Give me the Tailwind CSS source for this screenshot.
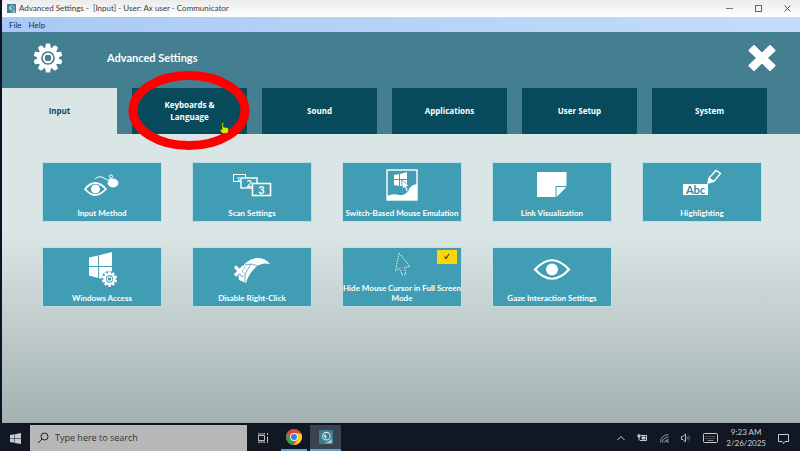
<!DOCTYPE html>
<html lang="en">
<head>
    <meta charset="UTF-8">
    <meta name="viewport" content="width=device-width, initial-scale=1.0">
    <title>Advanced Settings - Communicator</title>
    <script src="https://cdn.jsdelivr.net/npm/@tailwindcss/browser@4"></script>
</head>
<body class="min-h-screen flex flex-col bg-[#0d1426] font-['Lato','Open_Sans',sans-serif]">
    <!-- shared shapes -->
    <svg class="hidden">
        <symbol id="gear" viewBox="0 0 28 30">
            <g fill="currentColor">
                <g id="teeth">
                    <path d="M10.8 6 L12 0.6 H16 L17.2 6 Z" />
                    <path d="M10.8 6 L12 0.6 H16 L17.2 6 Z" transform="rotate(36 14 15)" />
                    <path d="M10.8 6 L12 0.6 H16 L17.2 6 Z" transform="rotate(72 14 15)" />
                    <path d="M10.8 6 L12 0.6 H16 L17.2 6 Z" transform="rotate(108 14 15)" />
                    <path d="M10.8 6 L12 0.6 H16 L17.2 6 Z" transform="rotate(144 14 15)" />
                </g>
                <use href="#teeth" transform="rotate(180 14 15)" />
            </g>
            <circle cx="14" cy="15" r="8.7" fill="none" stroke="currentColor" stroke-width="3.8" />
            <circle cx="14" cy="15" r="4.2" fill="none" stroke="currentColor" stroke-width="2" />
        </symbol>
        <symbol id="app" viewBox="0 0 16 16">
            <rect width="16" height="16" rx="1" fill="#3b7f8e" />
            <circle cx="8.500" cy="7" r="4.300" fill="none" stroke="#d5e8ea" stroke-width="1.200" />
            <path d="M6 5 Q9.500 5 8 10 L6 8 Z" fill="#d5e8ea" />
            <path d="M3 15 Q10 15.500 14.500 10 V15 Z" fill="#b5d3d7" />
        </symbol>
        <symbol id="windows" viewBox="0 0 24 24" preserveAspectRatio="none">
            <path d="M0 4.500 L9.500 2.800 V11.500 H0 Z M10.500 2.600 L24 0 V11.500 H10.500 Z M0 12.500 H9.500 V21.500 L0 19.500 Z M10.500 12.500 H24 V24 L10.500 21.700 Z" fill="currentColor" />
        </symbol>
    </svg>

    <div class="grow flex flex-col ml-0.5 mb-0.5">
        <div class="h-[17px] flex items-center pb-px bg-linear-to-b from-[#ececec] to-white text-[#3a3a3a]">
            <svg class="w-[9px] h-[9px] ml-[5px] mr-[3px]"><use href="#app" /></svg>
            <span class="text-[8px] leading-3 whitespace-pre">Advanced Settings -  [Input] - User: Ax user - Communicator</span>
            <div class="ml-auto mr-[9px] flex items-center gap-[22px]">
                <button aria-label="Minimize"><svg class="w-[7px] h-[7px]" viewBox="0 0 7 7" stroke="#777"><path d="M0 3.500 H7" /></svg></button>
                <button aria-label="Maximize"><svg class="w-[7px] h-[7px]" viewBox="0 0 7 7" fill="none" stroke="#666"><rect x="0.500" y="0.500" width="6" height="6" /></svg></button>
                <button aria-label="Close window"><svg class="w-[7px] h-[7px]" viewBox="0 0 7 7" stroke="#555"><path d="M0.500 0.500 L6.500 6.500 M6.500 0.500 L0.500 6.500" /></svg></button>
            </div>
        </div>

        <div class="h-[15px] flex items-center gap-[7px] pl-[7px] bg-linear-to-r from-[#a9c9f6] to-[#c4dcf8] text-[8px] leading-3 text-[#1c2c50]">
            <button>File</button>
            <button>Help</button>
        </div>

        <header class="bg-[#437e91] text-white">
            <div class="h-14 flex items-center pl-8 pr-6 pb-1">
                <svg class="w-7 h-[30px]"><use href="#gear" /></svg>
                <h1 class="ml-[45px] text-[11px] leading-4 font-bold">Advanced Settings</h1>
                <button class="ml-auto" aria-label="Close"><svg class="w-7 h-7" viewBox="0 0 28 28" fill="white" stroke="white" stroke-width="2" stroke-linejoin="round"><path d="M6 2 L14 10 L22 2 L26.500 6.500 L18.500 14 L26.500 21.500 L22 26 L14 18 L6 26 L1.500 21.500 L9.500 14 L1.500 6.500 Z" /></svg></button>
            </div>
            <nav class="grid grid-cols-6 gap-[15px] pr-[33px] font-['Open_Sans','Noto_Sans',sans-serif] text-[8px] leading-3 font-bold">
                <button class="h-[46px] bg-[#dae6e5] text-[#0b4a5a]">Input</button>
                <button class="relative h-[46px] bg-[#074a5b]">Keyboards &amp;<br>Language
                    <svg class="absolute z-10 -left-1 -top-[17px] w-[122px] h-[79px]" viewBox="0 0 122 79" fill="none"><ellipse cx="61" cy="39.500" rx="56" ry="35" stroke="#fe0000" stroke-width="9" /></svg>
                    <svg class="absolute z-20 right-[17px] top-[34px] w-[11px] h-3" viewBox="0 0 11 12"><path d="M3 0.500 H4.500 V5 L9.500 6 V9 L8.500 11.500 H3.500 L0.800 8 L1.500 7 L3 8 Z" fill="#d3f000" stroke="#374a10" stroke-width="0.700" /></svg>
                </button>
                <button class="h-[46px] bg-[#074a5b]">Sound</button>
                <button class="h-[46px] bg-[#074a5b]">Applications</button>
                <button class="h-[46px] bg-[#074a5b]">User Setup</button>
                <button class="h-[46px] bg-[#074a5b]">System</button>
            </nav>
        </header>

        <main class="grow pt-7 pl-10 pr-[38px] bg-linear-to-b from-[#dae6e5] from-35% to-[#a3b1b0]">
            <div class="grid grid-cols-5 gap-x-[30px] gap-y-[25px] text-[8px] leading-[10px] font-bold text-white">
                <button class="h-[60px] flex flex-col items-center justify-between pt-1 pb-[3px] bg-[#409db3] border border-[#bcdde3]">
                    <svg class="w-10 h-9" viewBox="0 0 40 36" fill="none" stroke="white">
                        <path d="M3 22 Q13 10 24 22 Q13 34 3 22 Z" stroke-width="1.800" />
                        <circle cx="13.500" cy="22" r="4" fill="white" />
                        <path d="M13 12 Q17 8 22 11 Q27 15 29 11" />
                        <circle cx="29" cy="9.500" r="1.600" />
                        <ellipse cx="31" cy="16" rx="5" ry="4" fill="white" />
                    </svg>
                    <span>Input Method</span>
                </button>
                <button class="h-[60px] flex flex-col items-center justify-between pt-1 pb-[3px] bg-[#409db3] border border-[#bcdde3]">
                    <svg class="w-10 h-9" viewBox="0 0 40 36" fill="#409db3" stroke="white">
                        <rect x="1.500" y="7.500" width="12" height="7" />
                        <rect x="9" y="11" width="16" height="10" stroke-width="1.400" />
                        <rect x="20.500" y="16.500" width="18" height="12" stroke-width="1.600" />
                        <g fill="white" stroke="none" font-weight="700" text-anchor="middle">
                            <text x="6.500" y="13.500" font-size="6">1</text>
                            <text x="17" y="19.500" font-size="9">2</text>
                            <text x="29.500" y="26.500" font-size="11">3</text>
                        </g>
                    </svg>
                    <span>Scan Settings</span>
                </button>
                <button class="h-[60px] flex flex-col items-center justify-between pt-1 pb-[3px] bg-[#409db3] border border-[#bcdde3]">
                    <svg class="w-10 h-9" viewBox="0 0 40 36" fill="white">
                        <rect x="5" y="3" width="30" height="30" fill="none" stroke="white" stroke-width="1.400" />
                        <path d="M5 29 Q11 26 17 28 Q24 29 27 22 Q29 18 35 17 V33 H5 Z" />
                        <path d="M12 8 L17 7 V12 H12 Z M18 7 L25 5 V12 H18 Z M12 13 H17 V19 L12 18 Z M18 13 H25 V20 L18 19 Z" />
                        <path d="M19.500 12.500 L20.500 22 L22.500 20.200 L24.500 24.500 L26.300 23.600 L24.300 19.600 L27 19 Z" stroke="#409db3" stroke-width="0.800" />
                    </svg>
                    <span class="whitespace-nowrap">Switch-Based Mouse Emulation</span>
                </button>
                <button class="h-[60px] flex flex-col items-center justify-between pt-1 pb-[3px] bg-[#409db3] border border-[#bcdde3]">
                    <svg class="w-10 h-9" viewBox="0 0 40 36" fill="white">
                        <path d="M5 5 H34.500 V19 H23.500 V30 H5 Z" />
                        <path d="M24.500 20 H34.500 L24.500 30 Z" />
                    </svg>
                    <span>Link Visualization</span>
                </button>
                <button class="h-[60px] flex flex-col items-center justify-between pt-1 pb-[3px] bg-[#409db3] border border-[#bcdde3]">
                    <svg class="w-10 h-9" viewBox="0 0 40 36" fill="white">
                        <rect x="1" y="17" width="25" height="11" />
                        <text x="13.500" y="26.500" font-size="11" font-weight="700" text-anchor="middle" fill="#2f8ca3">Abc</text>
                        <path d="M26 16 L27 11 L34 3.500 L38.500 6.500 L32 14.500 Z M27 11 L32 14.500" fill="none" stroke="white" stroke-width="1.400" />
                        <path d="M26 16 L27 11.500 L31.500 14.500 Z" />
                    </svg>
                    <span>Highlighting</span>
                </button>
                <button class="h-[60px] flex flex-col items-center justify-between pt-1 pb-[3px] bg-[#409db3] border border-[#bcdde3]">
                    <svg class="w-10 h-9" viewBox="0 0 40 36">
                        <use href="#windows" x="7" y="0" width="23" height="29" />
                        <circle cx="27.500" cy="27" r="8" fill="#409db3" />
                        <use href="#gear" x="20" y="19" width="15" height="16" />
                    </svg>
                    <span>Windows Access</span>
                </button>
                <button class="h-[60px] flex flex-col items-center justify-between pt-1 pb-[3px] bg-[#409db3] border border-[#bcdde3]">
                    <svg class="w-10 h-9" viewBox="0 0 40 36" fill="white">
                        <path d="M6 22 Q12 8 24 6 Q33 5 38 12 Q30 10 24 15 Q17 21 14 31 L7 28 Z" />
                        <path d="M13 13 L19 12 L26 14 M19 12 L13 22 V30" fill="none" stroke="#409db3" stroke-width="0.800" />
                        <path d="M3 14 L12 24 M12 14 L3 24" stroke="#409db3" stroke-width="4.500" />
                        <path d="M3 14.500 L12 23.500 M12 14.500 L3 23.500" stroke="white" stroke-width="3.200" />
                    </svg>
                    <span>Disable Right-Click</span>
                </button>
                <button class="relative h-[60px] flex flex-col items-center justify-between pt-1 pb-[3px] bg-[#409db3] border border-[#bcdde3]" aria-pressed="true">
                    <svg class="w-10 h-6" viewBox="0 0 40 24" fill="none" stroke="#e3f3f6" stroke-dasharray="1.500 1">
                        <path d="M17 1 L13.500 19 L18 16.500 L20 23 L24 22 L22.500 15.500 L28 14.500 Z" />
                    </svg>
                    <span class="whitespace-nowrap">Hide Mouse Cursor in Full Screen<br>Mode</span>
                    <span class="absolute top-[2px] right-1 w-5 h-[14px] flex items-center justify-center bg-[#fdd50b]">
                        <svg class="w-2 h-2" viewBox="0 0 8 8" fill="none" stroke="#3c3a10"><path d="M1.500 3.500 L3 5.500 L6 1" stroke-width="1.100" /></svg>
                    </span>
                </button>
                <button class="h-[60px] flex flex-col items-center justify-between pt-1 pb-[3px] bg-[#409db3] border border-[#bcdde3]">
                    <svg class="w-10 h-9" viewBox="0 0 40 36" fill="none" stroke="white">
                        <path d="M3 17.500 Q20 -1 37 17.500 Q20 36 3 17.500 Z" stroke-width="2.200" />
                        <circle cx="20" cy="17.500" r="6" fill="white" stroke="none" />
                    </svg>
                    <span>Gaze Interaction Settings</span>
                </button>
            </div>
        </main>
    </div>

    <footer class="h-[26px] flex items-stretch bg-[#111824] text-[#c9cccf]">
        <button class="w-[30px] flex items-center justify-center" aria-label="Start"><svg class="w-[11px] h-[11px]"><use href="#windows" /></svg></button>
        <label class="w-[217px] flex items-center gap-[6px] pl-[7px] bg-[#b7b7b7]">
            <svg class="w-3 h-3" viewBox="0 0 12 12" fill="none" stroke="#222"><circle cx="7.500" cy="4.500" r="3.500" /><path d="M5 7 L1 11" /></svg>
            <input type="text" aria-label="Search" placeholder="Type here to search" class="grow w-0 font-['Open_Sans',sans-serif] text-[9px] leading-4 placeholder:text-[#333] outline-none">
        </label>
        <button class="w-[31px] flex items-center justify-center" aria-label="Task view">
            <svg class="w-3 h-3" viewBox="0 0 12 12" fill="none" stroke="#b8bbbe"><rect x="1.500" y="3.500" width="6" height="5" /><path d="M1.500 1 V2 H7.500 V1 M1.500 11 V10 H7.500 V11 M10.500 1 V3 M10.500 4.500 V11" /></svg>
        </button>
        <button class="w-8 px-[3px] flex items-stretch" aria-label="Chrome">
            <span class="grow flex items-center justify-center border-b-2 border-[#6b9cd0]">
                <svg class="w-4 h-4" viewBox="0 0 16 16">
                    <circle cx="8" cy="8" r="8" fill="#dd4b3e" />
                    <path d="M1.100 4 L4.500 10 L8 11.500 L8 16 A8 8 0 0 1 1.100 4 Z" fill="#2fa052" />
                    <path d="M8 4.500 H15.200 A8 8 0 0 1 8 16 L11.500 10 Z" fill="#f8c92e" />
                    <circle cx="8" cy="8" r="4" fill="#eee" />
                    <circle cx="8" cy="8" r="3" fill="#3c7ee0" />
                </svg>
            </span>
        </button>
        <button class="w-[31px] flex items-center justify-center bg-[#3a4450] border-b-2 border-[#6b9cd0]" aria-label="Communicator"><svg class="w-[14px] h-[14px]"><use href="#app" /></svg></button>
        <div class="ml-auto mr-[11px] flex items-center gap-3">
            <svg class="w-2 h-2" viewBox="0 0 8 8" fill="none" stroke="currentColor"><path d="M0.500 6 L4 2.500 L7.500 6" /></svg>
            <svg class="w-[11px] h-2" viewBox="0 0 11 8" fill="none" stroke="currentColor"><path d="M4 1.500 H9.500 V6.500 H3" /><path d="M5 3 H8 V5 H5 Z M1 0.500 V3 H3 V0.500 M2 3 V6.500" fill="currentColor" /></svg>
            <svg class="w-[9px] h-[9px]" viewBox="0 0 9 9" fill="none" stroke="#a5a8ab" stroke-width="0.900"><path d="M0.500 8.500 Q1 1 8.500 0.500 M2.500 8.500 Q3 3.500 8.500 3 M4.500 8.500 Q5 6 8.500 5.500" /><circle cx="7.500" cy="7.500" r="0.800" /></svg>
            <svg class="w-[10px] h-[10px]" viewBox="0 0 10 10" fill="none" stroke="currentColor" stroke-width="0.900"><path d="M0.500 3.500 H2 L4.500 1 V9 L2 6.500 H0.500 Z" /><path d="M6 3.500 Q7 5 6 6.500 M7.500 2.500 Q9.500 5 7.500 7.500" stroke="#777b80" /></svg>
            <svg class="w-[15px] h-[10px]" viewBox="0 0 15 10" fill="none" stroke="currentColor"><rect x="0.500" y="0.500" width="14" height="9" rx="1" /><path d="M2.500 3.500 H12.500 M2.500 5.500 H12.500" stroke-dasharray="1 1" stroke="#85898e" /><path d="M4.500 7.500 H10.500" stroke="#85898e" /></svg>
            <div class="-ml-1 text-[8px] leading-[11px] text-center">9:23 AM<br>2/26/2025</div>
            <svg class="w-[11px] h-[11px]" viewBox="0 0 11 11" fill="none" stroke="currentColor"><path d="M0.500 1.500 H10.500 V8.500 H7 L5.500 10.500 L4 8.500 H0.500 Z" /></svg>
        </div>
    </footer>
</body>
</html>
